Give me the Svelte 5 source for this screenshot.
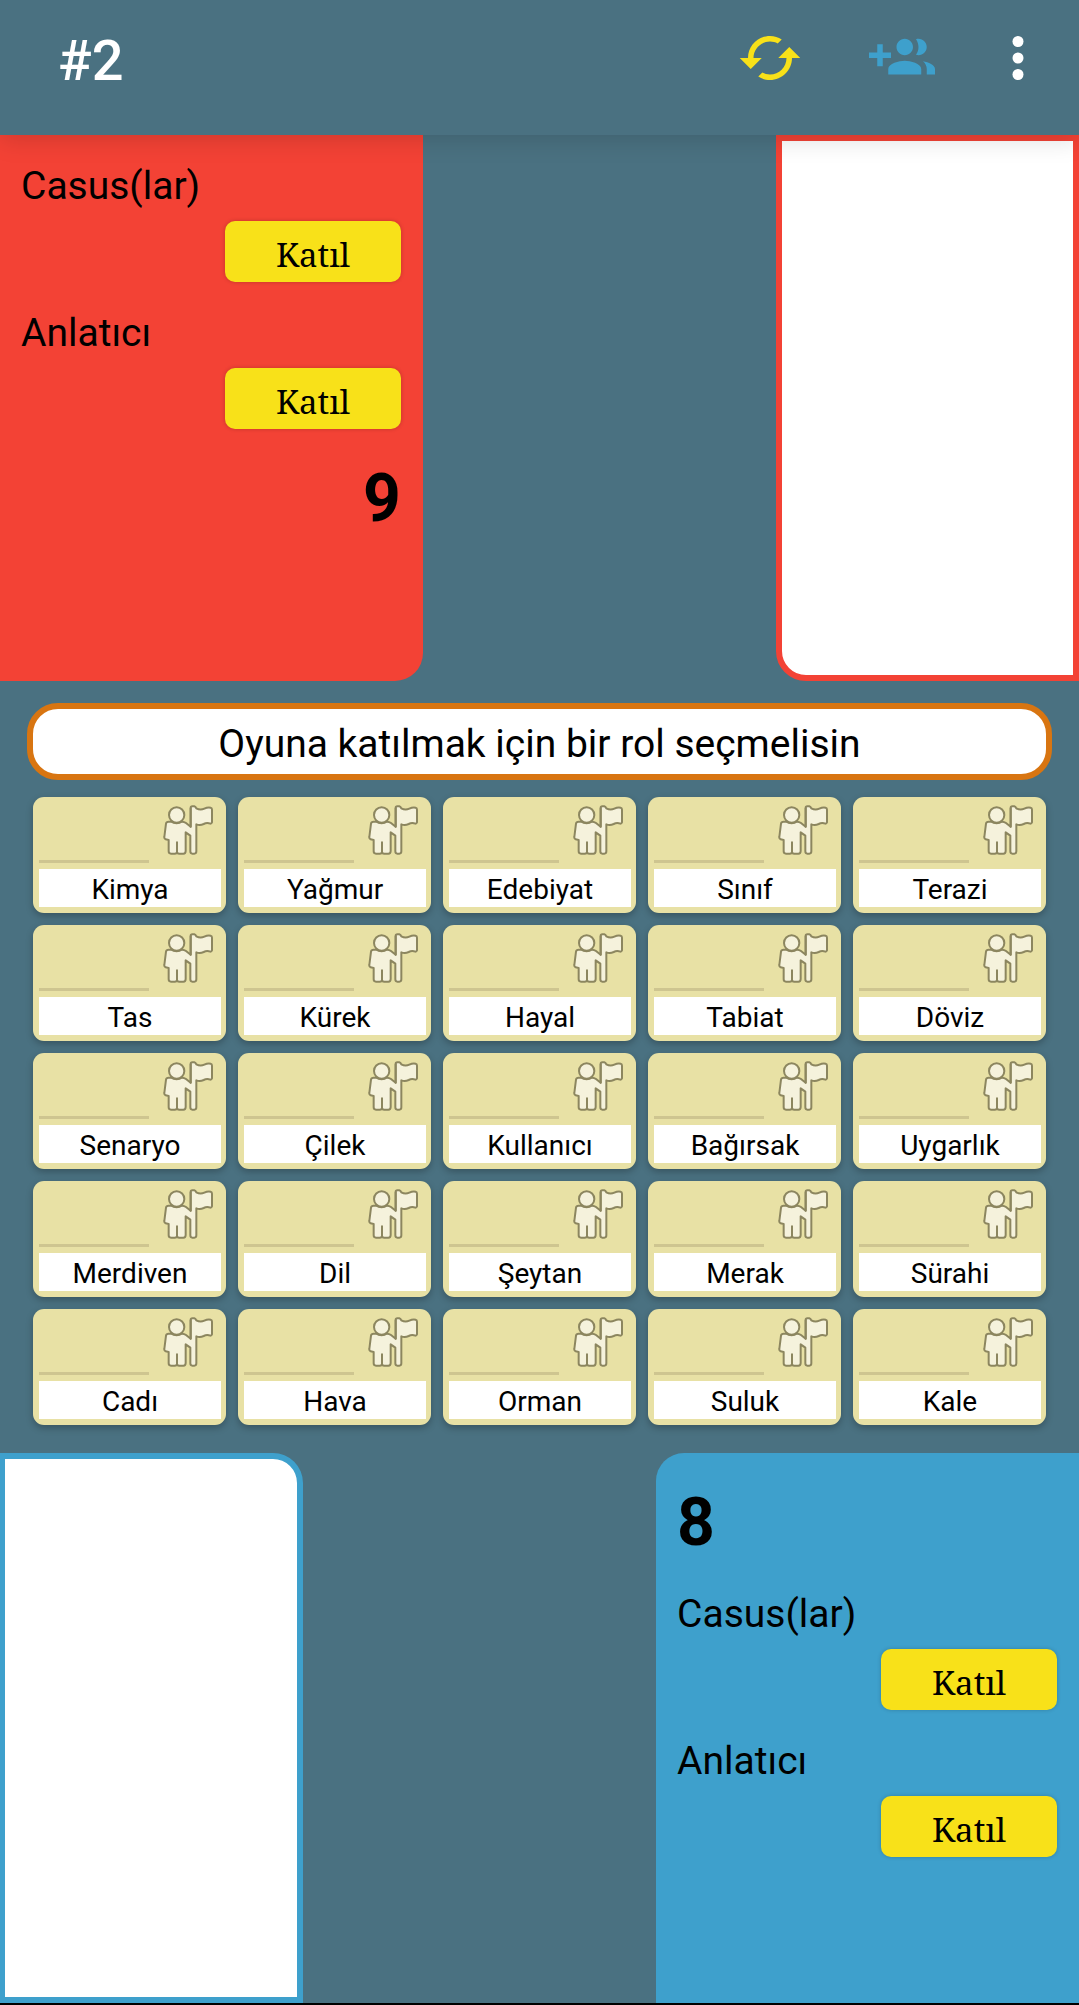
<script>
  const words = [
    'Kimya', 'Yağmur', 'Edebiyat', 'Sınıf', 'Terazi',
    'Tas', 'Kürek', 'Hayal', 'Tabiat', 'Döviz',
    'Senaryo', 'Çilek', 'Kullanıcı', 'Bağırsak', 'Uygarlık',
    'Merdiven', 'Dil', 'Şeytan', 'Merak', 'Sürahi',
    'Cadı', 'Hava', 'Orman', 'Suluk', 'Kale'
  ];
  const roles = ['Casus(lar)', 'Anlatıcı'];
</script>

{#snippet roleList()}
  {#each roles as role}
    <div class="role">
      <h2>{role}</h2>
      <button class="join" aria-label="{role}: Katıl">Katıl</button>
    </div>
  {/each}
{/snippet}

<div class="page">
  <header>
    <h1>#2</h1>
    <button class="action refresh" aria-label="Yenile">
      <svg viewBox="0 0 24 24" aria-hidden="true">
        <path d="M19 8l-4 4h3c0 3.31-2.69 6-6 6-1.01 0-1.97-.25-2.8-.7l-1.46 1.46C8.97 19.54 10.43 20 12 20c4.42 0 8-3.58 8-8h3l-4-4zM6 12c0-3.31 2.69-6 6-6 1.01 0 1.97.25 2.8.7l1.46-1.46C15.03 4.46 13.57 4 12 4c-4.42 0-8 3.58-8 8H1l4 4 4-4H6z" />
      </svg>
    </button>
    <button class="action invite" aria-label="Oyuncu ekle">
      <svg viewBox="0 0 24 24" aria-hidden="true">
        <path d="M8 10H5V7H3v3H0v2h3v3h2v-3h3v-2zm10 1c1.66 0 2.99-1.34 2.99-3S19.66 5 18 5c-.32 0-.63.05-.91.14.57.81.9 1.79.9 2.86s-.34 2.04-.9 2.86c.28.09.59.14.91.14zm-5 0c1.66 0 2.99-1.34 2.99-3S14.66 5 13 5c-1.66 0-3 1.34-3 3s1.34 3 3 3zm6.62 2.16c.83.73 1.38 1.66 1.38 2.84v2h3v-2c0-1.54-2.37-2.49-4.38-2.84zM13 13c-2 0-6 1-6 3v2h12v-2c0-2-4-3-6-3z" />
      </svg>
    </button>
    <button class="action more" aria-label="Menü">
      <svg viewBox="0 0 24 24" aria-hidden="true">
        <circle cx="12" cy="6" r="2" /><circle cx="12" cy="12" r="2" /><circle cx="12" cy="18" r="2" />
      </svg>
    </button>
  </header>

  <section class="side top">
    <div class="team red">
      {@render roleList()}
      <strong class="score">9</strong>
    </div>
    <div class="log red-log"></div>
  </section>

  <main>
    <p class="message">Oyuna katılmak için bir rol seçmelisin</p>
    <div class="board">
      {#each words as word}
        <button class="card">
          <span class="face">
            <span class="rule"></span>
            <svg viewBox="0 0 150 150" aria-hidden="true">
              <path d="M83 9Q83 4 88 4H94Q98 5 100 10Q112 17 124 11Q134 6 143 8Q147 9 147 14V52Q146 56 142 56Q132 52 122 57Q111 62 100 58V139Q100 146 94 146H88Q82 146 82 139V92L68 82V138Q68 146 61 146H49Q42 146 42 140Q42 146 35 146H24Q17 146 17 139V105L8 103Q3 101 4 96L9 56Q10 50 17 50H24Q41 59 57 50Q64 50 69 54L83 65Z" />
              <path d="M42 112V141M83 10V65" />
              <circle cx="41" cy="30" r="23" />
            </svg>
          </span>
          <span class="word">{word}</span>
        </button>
      {/each}
    </div>
  </main>

  <section class="side bottom">
    <div class="log blue-log"></div>
    <div class="team blue">
      <strong class="score">8</strong>
      {@render roleList()}
    </div>
  </section>
</div>

<style>
  :global(body) {
    margin: 0;
  }

  .page {
    display: flex;
    flex-direction: column;
    box-sizing: border-box;
    min-height: 100vh;
    border-bottom: 2px solid #000;
    background: #4a7181;
    color: #000;
    font-family: Roboto, "Liberation Sans", sans-serif;
  }

  button {
    margin: 0;
    padding: 0;
    border: 0;
    background: none;
    color: inherit;
    font: inherit;
    cursor: pointer;
  }

  header {
    position: relative;
    z-index: 1;
    display: flex;
    align-items: center;
    padding: 22px 11px 41px 58px;
    background: #4a7181;
    box-shadow: 0 4px 24px rgba(0, 0, 0, 0.15);
  }

  h1 {
    flex: 1;
    margin: 0;
    padding-top: 6px;
    color: #fff;
    font-size: 56px;
    font-weight: 500;
    line-height: 66px;
  }

  .action {
    padding: 0 33px;
  }

  .action svg {
    display: block;
    width: 66px;
    height: 66px;
    fill: currentColor;
  }

  .refresh {
    color: #f8e119;
  }

  .invite {
    color: #3ea0cc;
  }

  .more {
    padding: 0 17px;
    color: #fff;
  }

  .side {
    display: flex;
    flex: 1 1 auto;
    justify-content: space-between;
  }

  .top {
    min-height: 546px;
  }

  .bottom {
    min-height: 550px;
  }

  .team {
    display: flex;
    flex-direction: column;
    gap: 28px;
    box-sizing: border-box;
    width: 39.2%;
    padding: 28px 22px 28px 21px;
  }

  .red {
    border-bottom-right-radius: 28px;
    background: #f34235;
  }

  .blue {
    border-top-left-radius: 28px;
    background: #3ea0cc;
  }

  .role {
    display: flex;
    flex-direction: column;
    gap: 12px;
  }

  h2 {
    margin: 0;
    font-size: 39px;
    font-weight: 400;
    line-height: 46px;
  }

  .join {
    align-self: flex-end;
    width: 176px;
    padding: 6px 0 0;
    border-radius: 10px;
    background: #f8e119;
    box-shadow: 0 0 4px rgba(0, 0, 0, 0.2);
    font-family: "Noto Serif", "DejaVu Serif", serif;
    font-size: 33px;
    line-height: 55px;
  }

  .score {
    padding-top: 2px;
    font-size: 66px;
    font-weight: 700;
    line-height: 80px;
  }

  .red .score {
    align-self: flex-end;
  }

  .log {
    box-sizing: border-box;
    width: 28.1%;
    border: 6px solid;
    background: #fff;
  }

  .red-log {
    border-color: #f34235;
    border-bottom-left-radius: 30px;
  }

  .blue-log {
    border-color: #3ea0cc;
    border-left-width: 5px;
    border-top-right-radius: 30px;
  }

  main {
    padding: 22px 27px 28px;
  }

  .message {
    margin: 0;
    padding: 12px 20px 7px;
    border: 6px solid #d87511;
    border-radius: 31px;
    background: #fff;
    font-size: 39px;
    line-height: 46px;
    text-align: center;
  }

  .board {
    display: grid;
    grid-template-columns: repeat(5, minmax(0, 1fr));
    gap: 12px;
    padding: 17px 6px 0;
  }

  .card {
    display: flex;
    flex-direction: column;
    gap: 6px;
    padding: 6px 5px 6px 6px;
    border-radius: 11px;
    background: #e8e1a5;
    box-shadow: 0 3px 7px rgba(0, 0, 0, 0.25);
  }

  .face {
    display: flex;
    align-items: flex-end;
    justify-content: space-between;
    align-self: stretch;
    height: 60px;
    padding-right: 8px;
  }

  .rule {
    width: 63%;
    height: 3px;
    background: #cec590;
  }

  .face svg {
    width: 50px;
    height: 50px;
    margin-bottom: 8px;
    fill: #f5f2dc;
    stroke: #8c865f;
    stroke-width: 6;
    stroke-linejoin: round;
    stroke-linecap: round;
  }

  .word {
    align-self: stretch;
    padding-top: 4px;
    background: #fff;
    font-size: 28px;
    line-height: 34px;
    text-align: center;
  }
</style>
